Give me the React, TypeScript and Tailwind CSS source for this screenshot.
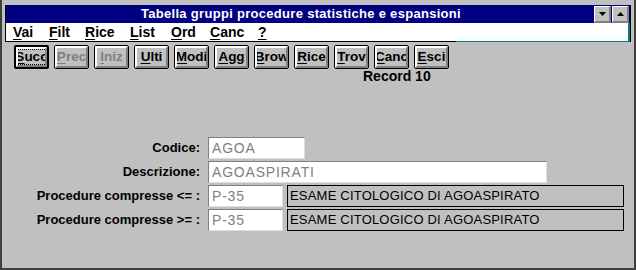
import React from 'react';

const sys = { fontFamily: '"Liberation Sans", Arial, sans-serif' };

const menus = [
  { label: 'Vai', x: 'w-[36px]' },
  { label: 'Filt', x: 'w-[36px]' },
  { label: 'Rice', x: 'w-[45px]' },
  { label: 'List', x: 'w-[41px]' },
  { label: 'Ord', x: 'w-[39px]' },
  { label: 'Canc', x: 'w-[48px]' },
  { label: '?', x: 'w-[20px]' },
];

const buttons = [
  { label: 'Succ', disabled: false, def: true },
  { label: 'Prec', disabled: true },
  { label: 'Iniz', disabled: true },
  { label: 'Ulti' },
  { label: 'Modi' },
  { label: 'Agg' },
  { label: 'Brow' },
  { label: 'Rice' },
  { label: 'Trov' },
  { label: 'Canc' },
  { label: 'Esci' },
];

const Mnemonic: React.FC<{ text: string }> = ({ text }) => (
  <>
    <span className="underline underline-offset-2">{text[0]}</span>
    {text.slice(1)}
  </>
);

const ToolButton: React.FC<{ label: string; disabled?: boolean; def?: boolean }> = ({ label, disabled, def }) => (
  <div
    className={`w-[35px] h-[24px] rounded-[2px] bg-[#c0c0c0] ${def ? 'border-2' : 'border'} border-black overflow-hidden`}
  >
    <div className="h-full w-full border-t-2 border-l-2 border-t-white border-l-white border-b-2 border-r-2 border-b-[#808080] border-r-[#808080] flex items-center justify-center overflow-hidden">
      <span
        className={`text-[13.5px] font-bold leading-none whitespace-nowrap ${disabled ? 'text-[#808080]' : 'text-black'} ${def ? 'outline outline-1 outline-dotted outline-black' : ''}`}
      >
        <Mnemonic text={label} />
      </span>
    </div>
  </div>
);

const CaptionButton: React.FC<{ up?: boolean }> = ({ up }) => (
  <div className="w-[17px] h-[17px] bg-[#c0c0c0] border-t border-l border-t-white border-l-white border-b-2 border-r-2 border-b-[#808080] border-r-[#808080] flex items-center justify-center">
    <svg width="7" height="4" viewBox="0 0 7 4">
      {up ? <polygon points="3.5,0 7,4 0,4" fill="black" /> : <polygon points="0,0 7,0 3.5,4" fill="black" />}
    </svg>
  </div>
);

const Field: React.FC<{ value: string; w: string }> = ({ value, w }) => (
  <div className={`${w} h-[22px] bg-white border-t border-l border-t-[#808080] border-l-[#808080] border-b border-r border-b-[#dfdfdf] border-r-[#dfdfdf] flex items-center pl-[3px] text-[14px] tracking-[0.8px] text-[#808080] overflow-hidden whitespace-nowrap`}>
    {value}
  </div>
);

const Label: React.FC<{ text: string }> = ({ text }) => (
  <div className="w-[206px] text-right pr-[8px] text-[13px] font-bold text-black whitespace-nowrap">{text}</div>
);

const Desc: React.FC<{ text: string }> = ({ text }) => (
  <div className="ml-[4px] w-[337px] h-[22px] border border-black flex items-center pl-[2px] text-[13px] tracking-[0.2px] text-black">
    {text}
  </div>
);

const App: React.FC = () => {
  return (
    <div className="w-[636px] h-[270px] bg-[#c0c0c0] border-2 border-t-0 border-[#404040] overflow-hidden" style={sys}>
      <div className="mx-[3px] mt-[5px] border-l border-r border-black">
        <div className="h-[18px] bg-[#000080] flex items-center">
          <div className="flex-1 text-center text-white text-[13px] font-bold tracking-[0.3px] pl-[2px]">
            Tabella gruppi procedure statistiche e espansioni
          </div>
          <div className="flex gap-[1px] pr-[1px]">
            <CaptionButton />
            <CaptionButton up />
          </div>
        </div>
        <div className="h-[18px] bg-white flex items-center pl-[7px] text-[14px] font-bold text-black border-r-2 border-r-[#008080]">
          {menus.map((m) => (
            <div key={m.label} className={m.x}>
              <Mnemonic text={m.label} />
            </div>
          ))}
        </div>
        <div className="flex h-[1px]">
          <div className="w-[450px] bg-black" />
          <div className="flex-1 bg-[#008080]" />
        </div>
      </div>
      <div className="pl-[12px] pt-[3px] flex gap-[5px]">
        {buttons.map((b) => (
          <ToolButton key={b.label} label={b.label} disabled={b.disabled} def={b.def} />
        ))}
      </div>
      <div className="pl-[361px] text-[14px] font-bold text-black leading-[14px]">Record 10</div>
      <div className="mt-[54px] flex flex-col gap-[2px]">
        <div className="flex items-center">
          <Label text="Codice:" />
          <Field value="AGOA" w="w-[97px]" />
        </div>
        <div className="flex items-center">
          <Label text="Descrizione:" />
          <Field value="AGOASPIRATI" w="w-[339px]" />
        </div>
        <div className="flex items-center">
          <Label text="Procedure compresse <= :" />
          <Field value="P-35" w="w-[75px]" />
          <Desc text="ESAME CITOLOGICO DI AGOASPIRATO" />
        </div>
        <div className="flex items-center">
          <Label text="Procedure compresse >= :" />
          <Field value="P-35" w="w-[75px]" />
          <Desc text="ESAME CITOLOGICO DI AGOASPIRATO" />
        </div>
      </div>
    </div>
  );
};

export default App;
